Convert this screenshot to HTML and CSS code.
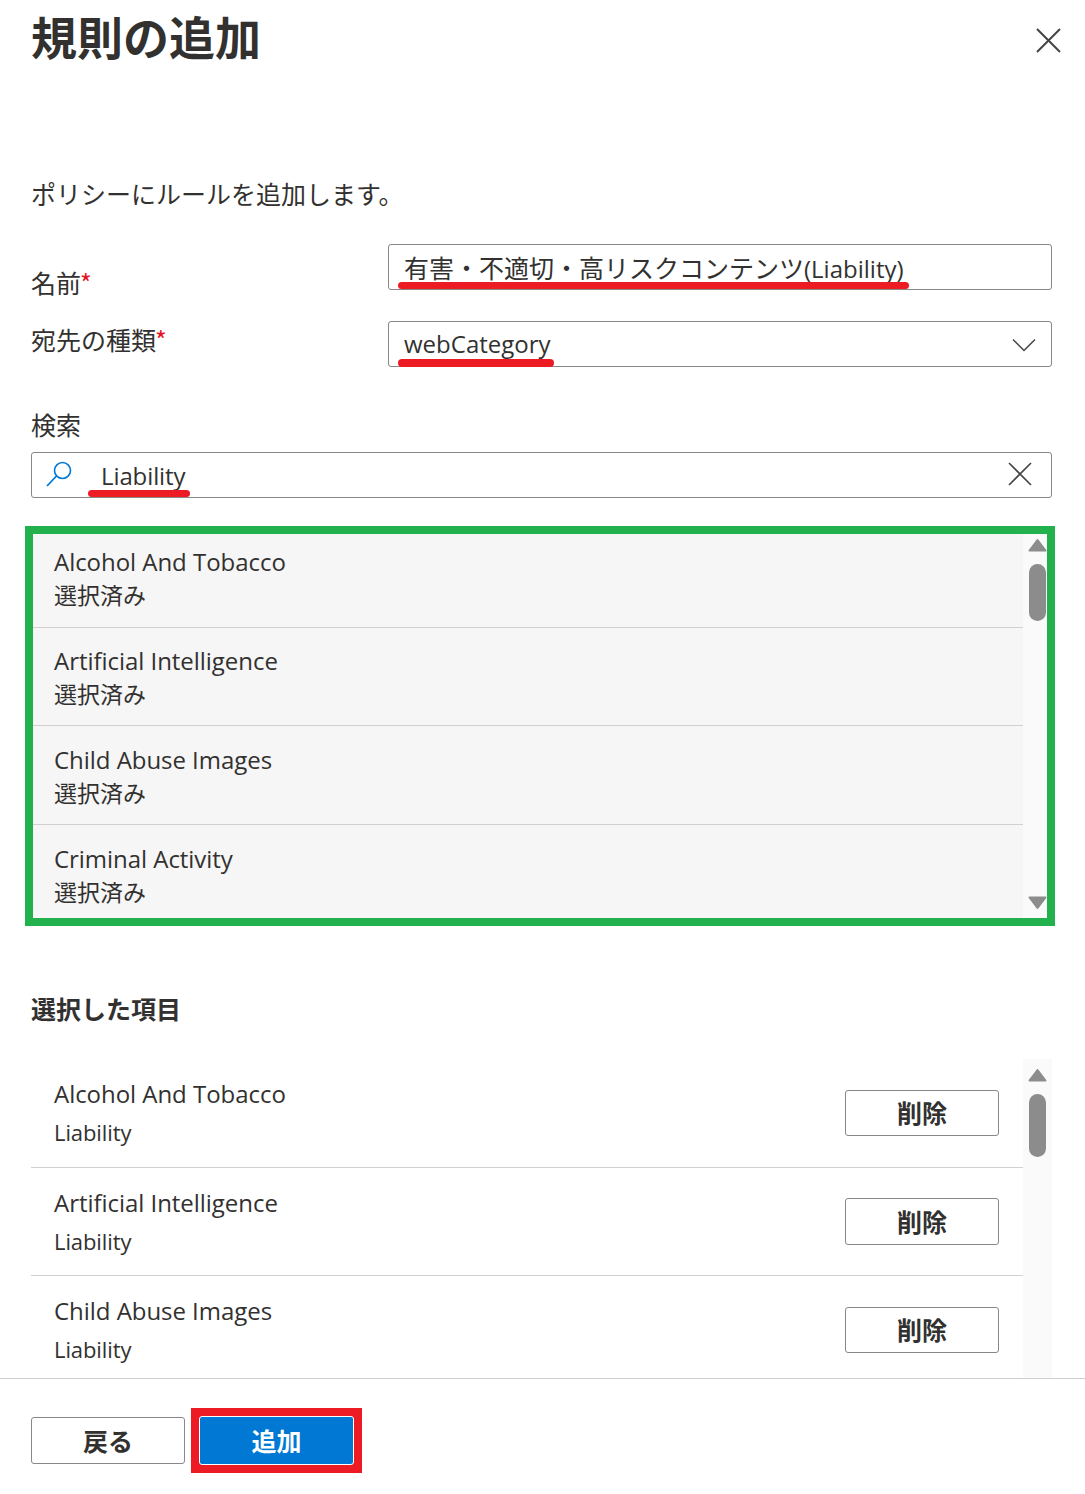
FILE: index.html
```html
<!DOCTYPE html>
<html lang="ja">
<head>
<meta charset="utf-8">
<title>規則の追加</title>
<link rel="stylesheet" href="styles.css">
</head>
<body>
<div class="panel">
  <main class="body">
    <header class="head">
      <h1 class="title">規則の追加</h1>
      <svg class="close" width="25" height="25" viewBox="0 0 25 25"><path d="M1 1L24 24M24 1L1 24" stroke="#444" stroke-width="2" fill="none"/></svg>
    </header>
    <p class="intro">ポリシーにルールを追加します。</p>

    <div class="field name-field">
      <label class="label name-label">名前<span class="req">*</span></label>
      <div class="box control name-control"><span class="cjk">有害・不適切・高リスクコンテンツ</span>(Liability)<span class="mark mark-name"></span></div>
    </div>
    <div class="field type-field">
      <label class="label type-label">宛先の種類<span class="req">*</span></label>
      <div class="box control select">webCategory<span class="mark mark-type"></span>
        <svg class="chev" width="24" height="14" viewBox="0 0 24 14"><path d="M1 1.5L12 12.5L23 1.5" stroke="#444" stroke-width="1.5" fill="none"/></svg>
      </div>
    </div>

    <div class="search-label">検索</div>
    <div class="box search">
      <svg class="lens" width="28" height="28" viewBox="0 0 28 28"><circle cx="17.5" cy="10.5" r="8" stroke="#0078d4" stroke-width="1.6" fill="none"/><path d="M11.5 16L2 26" stroke="#0078d4" stroke-width="1.8" fill="none"/></svg>
      <span class="search-text">Liability</span><span class="mark mark-search"></span>
      <svg class="clear" width="24" height="24" viewBox="0 0 24 24"><path d="M1 1L23 23M23 1L1 23" stroke="#444" stroke-width="1.6" fill="none"/></svg>
    </div>

    <section class="results">
      <ul class="result-list">
        <li class="result"><div class="item-name">Alcohol And Tobacco</div><div class="item-state">選択済み</div></li>
        <li class="result"><div class="item-name">Artificial Intelligence</div><div class="item-state">選択済み</div></li>
        <li class="result"><div class="item-name">Child Abuse Images</div><div class="item-state">選択済み</div></li>
        <li class="result"><div class="item-name">Criminal Activity</div><div class="item-state">選択済み</div></li>
      </ul>
      <div class="scrollbar">
        <svg class="arrow up" width="19" height="14" viewBox="0 0 19 14"><path d="M9.5 2L17.5 12.5H1.5Z" fill="#8c8c8c" stroke="#8c8c8c" stroke-width="2" stroke-linejoin="round"/></svg>
        <span class="thumb thumb-a"></span>
        <svg class="arrow down" width="19" height="14" viewBox="0 0 19 14"><path d="M9.5 12L17.5 1.5H1.5Z" fill="#8c8c8c" stroke="#8c8c8c" stroke-width="2" stroke-linejoin="round"/></svg>
      </div>
    </section>

    <h2 class="subhead">選択した項目</h2>

    <section class="selected">
      <ul class="selected-list">
        <li class="sel"><div><div class="item-name">Alcohol And Tobacco</div><div class="item-cat">Liability</div></div><button class="btn del">削除</button></li>
        <li class="sel"><div><div class="item-name">Artificial Intelligence</div><div class="item-cat">Liability</div></div><button class="btn del">削除</button></li>
        <li class="sel"><div><div class="item-name">Child Abuse Images</div><div class="item-cat">Liability</div></div><button class="btn del">削除</button></li>
      </ul>
      <div class="scrollbar wide">
        <svg class="arrow up" width="19" height="14" viewBox="0 0 19 14"><path d="M9.5 2L17.5 12.5H1.5Z" fill="#8c8c8c" stroke="#8c8c8c" stroke-width="2" stroke-linejoin="round"/></svg>
        <span class="thumb thumb-b"></span>
      </div>
    </section>
  </main>
  <footer class="foot">
    <button class="btn back">戻る</button>
    <div class="add-wrap"><button class="btn add">追加</button></div>
  </footer>
</div>
</body>
</html>
```

FILE: styles.css
```css
* { box-sizing: border-box; }
html, body { margin: 0; padding: 0; background: #fff; }
body {
  width: 1085px;
  height: 1494px;
  overflow: hidden;
  font-family: "Open Sans", "Noto Sans CJK JP", sans-serif;
  font-size: 24px;
  color: #323130;
}
.panel { display: flex; flex-direction: column; height: 1494px; }
.body { height: 1378px; overflow: hidden; padding-left: 31px; flex: none; }
.head { display: flex; justify-content: space-between; height: 79px; padding-right: 24px; }
.title { margin: 0; font-size: 46px; line-height: 71px; height: 71px; font-weight: 700; font-family: "Noto Sans CJK JP", sans-serif; }
.close { margin-top: 28px; }
.intro { margin: 0; padding-top: 97px; height: 165px; font-size: 25px; line-height: 34px; font-family: "Noto Sans CJK JP", sans-serif; }
.field { display: flex; width: 1021px; justify-content: space-between; }
.label { font-size: 25px; line-height: 34px; font-family: "Noto Sans CJK JP", sans-serif; }
.name-field { height: 77px; }
.name-label { padding-top: 21px; }
.type-field { height: 86px; }
.type-label { padding-top: 1px; }
.req { color: #e81123; margin-left: -1px; }
.box { position: relative; height: 46px; border: 1px solid #8a8886; border-radius: 3px; background: #fff; }
.control { width: 664px; padding-left: 15px; line-height: 44px; font-size: 24px; white-space: nowrap; }
.name-control { line-height: 45px; }
.cjk { font-size: 25px; font-family: "Noto Sans CJK JP", sans-serif; }
.select { display: block; }
.chev { position: absolute; right: 15px; top: 16px; }
.mark { position: absolute; height: 7px; border-radius: 4px; background: #ed1c24; }
.mark-name { left: 9px; width: 511px; top: 37px; }
.mark-type { left: 9px; width: 156px; top: 37px; height: 8px; }
.mark-search { left: 56px; width: 102px; top: 37px; }
.search-label { height: 39px; font-size: 25px; line-height: 34px; font-family: "Noto Sans CJK JP", sans-serif; }
.search { display: flex; align-items: center; width: 1021px; margin-top: 6px; padding-left: 13px; }
.lens { flex: none; margin-top: -2px; }
.search-text { margin-left: 28px; line-height: 46px; font-size: 24px; padding-top: 1px; letter-spacing: -0.1px; }
.clear { position: absolute; right: 19px; top: 9px; }
.results {
  display: flex;
  width: 1030px;
  height: 400px;
  margin: 28px 0 0 -6px;
  border: 8px solid #22b14c;
  overflow: hidden;
}
.result-list { flex: 1; margin: 0; padding: 0; list-style: none; background: #f6f6f6; }
.result { height: 99px; padding: 17px 0 0 21px; border-bottom: 1px solid #d2d0ce; }
.result:first-child { height: 94px; padding-top: 11px; }
.result:nth-child(2) { height: 98px; padding-top: 16px; }
.result:last-child { border-bottom: 0; }
.item-name { font-size: 24px; line-height: 34px; white-space: nowrap; letter-spacing: -0.04px; }
.item-state { font-size: 23px; line-height: 31px; font-family: "Noto Sans CJK JP", sans-serif; }
.scrollbar { position: relative; width: 24px; background: #fafafa; flex: none; }
.scrollbar.wide { width: 29px; }
.arrow { position: absolute; left: 5px; display: block; }
.arrow.up { top: 4px; }
.arrow.down { bottom: 8px; }
.thumb { position: absolute; left: 6px; width: 17px; border-radius: 9px; background: #8c8c8c; }
.thumb-a { top: 30px; height: 57px; }
.thumb-b { top: 35px; height: 63px; }
.wide .arrow.up { top: 9px; }
.subhead { margin: 64px 0 0; height: 69px; font-size: 25px; line-height: 36px; font-weight: 700; font-family: "Noto Sans CJK JP", sans-serif; }
.selected { display: flex; width: 1021px; height: 319px; overflow: hidden; }
.selected-list { width: 992px; margin: 0; padding: 0; list-style: none; flex: none; }
.sel { display: flex; justify-content: space-between; height: 109px; padding: 18px 24px 0 23px; border-bottom: 1px solid #d2d0ce; }
.sel:nth-child(2) { height: 108px; }
.sel:last-child { border-bottom: 0; padding-top: 18px; }
.item-cat { font-size: 22px; line-height: 32px; margin-top: 5px; letter-spacing: -0.1px; }
.btn { font-family: "Noto Sans CJK JP", sans-serif; font-size: 25px; font-weight: 700; color: #323130; background: #fff; border: 1px solid #8a8886; border-radius: 3px; padding: 0 0 2px; }
.del { width: 154px; height: 46px; margin-top: 13px; }
.sel:nth-child(2) .del { margin-top: 12px; height: 47px; }
.foot { flex: 1; display: flex; align-items: flex-start; border-top: 1px solid #d2d0ce; padding: 29px 0 0 31px; gap: 6px; }
.back { width: 154px; height: 47px; margin-top: 9px; }
.add-wrap { width: 171px; height: 65px; padding: 8px; background: #ed1c24; }
.add { display: block; width: 155px; height: 49px; color: #fff; background: #0078d4; border: 1px solid #fff; }
```
